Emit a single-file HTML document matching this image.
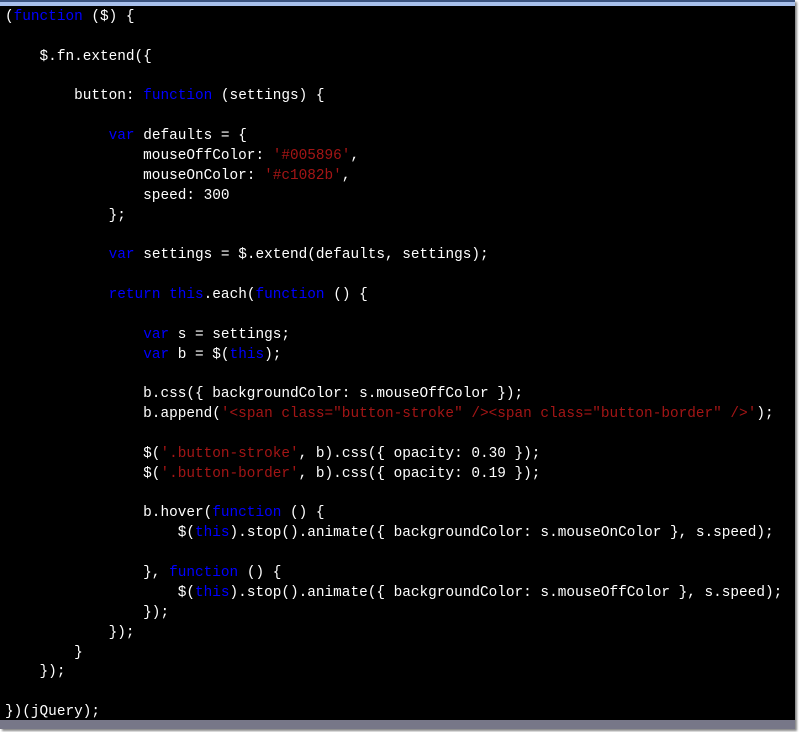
<!DOCTYPE html>
<html><head><meta charset="utf-8"><style>
html,body{margin:0;padding:0;background:#fff;width:799px;height:732px;overflow:hidden}
#win{position:absolute;left:0;top:0;width:795px;height:729px;background:#000;box-shadow:2px 2px 2px #888}
#t1{position:absolute;left:0;top:0;width:795px;height:2px;background:#3c5480}
#t2{position:absolute;left:0;top:2px;width:795px;height:4px;background:#a8c0ec}
#bot{position:absolute;left:0;top:720px;width:795px;height:9px;background:#777788}
pre{position:absolute;left:5px;top:8px;margin:0;font-family:"Liberation Mono",monospace;font-size:14.4px;line-height:19.86px;color:#fff;font-weight:normal;letter-spacing:0}
.k{color:#0000ff}.s{color:#a31515}
</style></head><body><div id="win"><div id="t1"></div><div id="t2"></div>
<pre>(<span class="k">function</span> ($) {

    $.fn.extend({

        button: <span class="k">function</span> (settings) {

            <span class="k">var</span> defaults = {
                mouseOffColor: <span class="s">'#005896'</span>,
                mouseOnColor: <span class="s">'#c1082b'</span>,
                speed: 300
            };

            <span class="k">var</span> settings = $.extend(defaults, settings);

            <span class="k">return</span> <span class="k">this</span>.each(<span class="k">function</span> () {

                <span class="k">var</span> s = settings;
                <span class="k">var</span> b = $(<span class="k">this</span>);

                b.css({ backgroundColor: s.mouseOffColor });
                b.append(<span class="s">'&lt;span class="button-stroke" /&gt;&lt;span class="button-border" /&gt;'</span>);

                $(<span class="s">'.button-stroke'</span>, b).css({ opacity: 0.30 });
                $(<span class="s">'.button-border'</span>, b).css({ opacity: 0.19 });

                b.hover(<span class="k">function</span> () {
                    $(<span class="k">this</span>).stop().animate({ backgroundColor: s.mouseOnColor }, s.speed);

                }, <span class="k">function</span> () {
                    $(<span class="k">this</span>).stop().animate({ backgroundColor: s.mouseOffColor }, s.speed);
                });
            });
        }
    });

})(jQuery);</pre>
<div id="bot"></div></div></body></html>
